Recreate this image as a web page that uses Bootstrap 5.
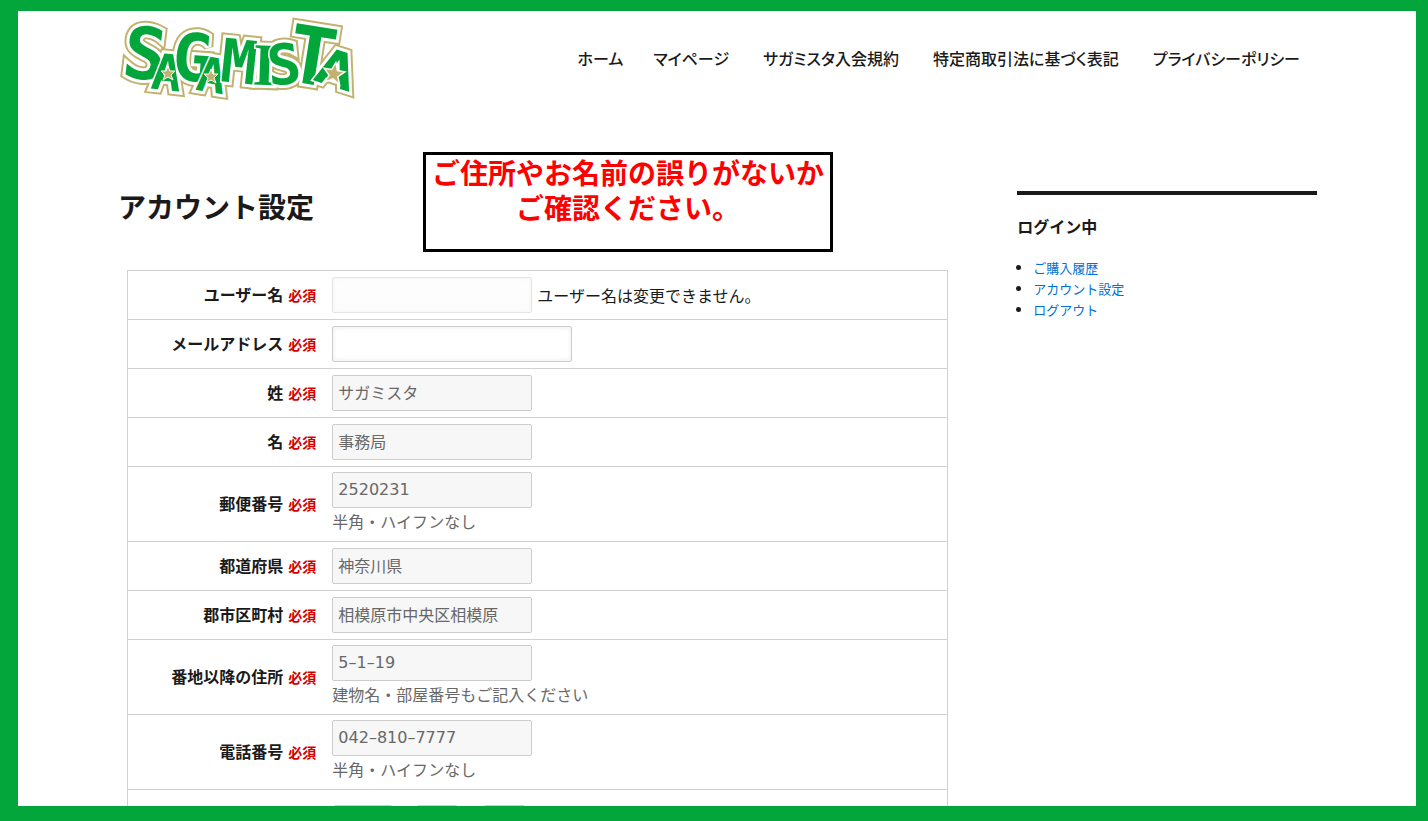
<!DOCTYPE html>
<html lang="ja">
<head>
<meta charset="utf-8">
<meta name="viewport" content="width=device-width, initial-scale=1">
<title>アカウント設定 | SAGAMISTA</title>
<link href="https://cdn.jsdelivr.net/npm/bootstrap@5.3.0/dist/css/bootstrap.min.css" rel="stylesheet">
<style>
body { font-family: "Noto Sans CJK JP", sans-serif; font-size: 16px; line-height: 26px; color: #1a1a1a; background: #02a63b; }
.site-frame { height: 100vh; padding: 11px 12px 15px 18px; }
.site-inner { height: 100%; overflow: hidden; background: #fff; padding: 0 99px 0 100px; }
.site-header { height: 96px; }
.site-logo { width: 240px; height: 76px; display: block; overflow: visible; }
.logo-front { paint-order: stroke; }
.site-nav { gap: 34px; padding-right: 17px; padding-bottom: 2px; font-feature-settings: "palt"; }
.site-nav .nav-link { padding: 0; color: #1a1a1a; font-weight: 500; }
.site-nav .nav-item:first-child { margin-right: -4px; }
.main-col { width: 70%; padding-top: 45px; }
.side-col { width: 25%; padding-top: 84px; }
.title-row { gap: 109px; margin-bottom: 18px; }
.title-row h1 { font-size: 28px; line-height: 36px; font-weight: 700; padding-top: 8px; }
.notice { width: 410px; height: 100px; border: 3px solid #000; color: #f00; font-size: 28px; line-height: 35px; font-weight: 700; }
.account-table { width: calc(100% - 18px); margin: 0 9px; border: 1px solid #d1d1d1; }
.account-table tr { border-top: 1px solid #d1d1d1; }
.account-table th { width: 24%; padding: 5px 8px 7px; text-align: right; vertical-align: middle; }
.account-table td { padding: 6px 8px; }
.account-table td.with-help { padding: 5px 8px 7px; }
.required { color: #d40000; font-size: 14px; margin-left: 5px; }
.account-table .form-control { width: 200px; height: 36px; padding: 0 5px 2px; border: 1px solid #ccc; border-radius: 2px; background: #f7f7f7; color: #686868; font-family: "DejaVu Sans", "Noto Sans CJK JP", sans-serif; font-size: 16px; line-height: 24px; }
.account-table .form-control.mail-box { width: 240px; background: #fff; box-shadow: inset 0 0 3px 2px #f5f5f5; }
.account-table .form-control:disabled { border-color: #e4e4e4; background: #fdfdfd; box-shadow: inset 0 0 3px 2px #f9f9f9; }
.user-line { gap: 5px; }
.help { color: #686868; }
.account-table .birth-row td { padding-top: 15px; }
.birth-row select { height: 24px; border: 1px solid #ccc; border-radius: 4px; appearance: none; background: linear-gradient(#3b99fc, #3b99fc) right / 16px 100% no-repeat border-box #fff; }
.birth-year { width: 62px; margin-right: 21px; }
.birth-month { width: 44px; margin-right: 23px; }
.birth-day { width: 45px; }
.side-col section { border-top: 4px solid #1a1a1a; padding-top: 18px; }
.side-col h2 { font-size: 16px; line-height: 26px; font-weight: 700; margin-bottom: 18px; }
.side-col ul { padding-left: 16px; font-size: 13px; line-height: 21px; }
.side-col a { color: #0070d2; text-decoration: none; }
</style>
</head>
<body>
<div class="site-frame">
<div class="site-inner">
  <header class="site-header d-flex align-items-center justify-content-between">
    <a href="#" aria-label="SAGAMISTA">
      <svg class="site-logo" viewBox="118 21 240 76">
        <defs>
          <g id="logo-word" font-family="'DejaVu Sans Mono',monospace" font-weight="700" text-anchor="middle" stroke-linejoin="miter" stroke-miterlimit="3">
            <text transform="translate(142 79) rotate(7)" font-size="72">S</text>
            <text transform="translate(191 81) rotate(4)" font-size="66">G</text>
            <text transform="translate(165 90) rotate(6)" font-size="50">A</text>
            <text transform="translate(209 92) rotate(9)" font-size="48">A</text>
            <text transform="translate(237 83) rotate(6)" font-size="60">M</text>
            <text transform="translate(264 85) rotate(2)" font-size="60" font-family="Liberation Serif">I</text>
            <text transform="translate(286 84) rotate(-6)" font-size="56">S</text>
            <text transform="translate(308 84) rotate(9)" font-size="80">T</text>
            <text transform="translate(331 86) rotate(18)" font-size="50" font-family="DejaVu Sans">A</text>
          </g>
          <polygon id="logo-star" points="0,-7 2,-2 7,-2 3,2 5,7 0,4 -5,7 -3,2 -7,-2 -2,-2"/>
        </defs>
        <use href="#logo-word" fill="#c2b270" stroke="#c2b270" stroke-width="10"/>
        <use href="#logo-word" fill="#fff" stroke="#fff" stroke-width="6"/>
        <use class="logo-front" href="#logo-word" fill="#02a63b" stroke="#fff" stroke-width="3"/>
        <g fill="#c2b270" stroke="#fff" stroke-width="1">
          <use href="#logo-star" x="168" y="73"/>
          <use href="#logo-star" x="211" y="76"/>
          <use href="#logo-star" transform="translate(334 73) rotate(10) scale(1.5)"/>
        </g>
      </svg>
    </a>
    <nav>
      <ul class="nav site-nav flex-nowrap">
        <li class="nav-item"><a class="nav-link" href="#">ホーム</a></li>
        <li class="nav-item"><a class="nav-link" href="#">マイページ</a></li>
        <li class="nav-item"><a class="nav-link" href="#">サガミスタ入会規約</a></li>
        <li class="nav-item"><a class="nav-link" href="#">特定商取引法に基づく表記</a></li>
        <li class="nav-item"><a class="nav-link" href="#">プライバシーポリシー</a></li>
      </ul>
    </nav>
  </header>

  <div class="d-flex justify-content-between align-items-start">
    <main class="main-col">
      <div class="title-row d-flex align-items-center">
        <h1 class="mb-0 text-nowrap">アカウント設定</h1>
        <div class="notice text-center text-nowrap flex-shrink-0">
          <div>ご住所やお名前の誤りがないか</div>
          <div>ご確認ください。</div>
        </div>
      </div>
      <form>
      <table class="account-table">
        <tbody>
          <tr>
            <th><label for="user">ユーザー名</label><span class="required">必須</span></th>
            <td><div class="user-line d-flex align-items-center"><input id="user" class="form-control" type="text" disabled><span>ユーザー名は変更できません。</span></div></td>
          </tr>
          <tr>
            <th><label for="mail">メールアドレス</label><span class="required">必須</span></th>
            <td><input id="mail" class="form-control mail-box" type="email"></td>
          </tr>
          <tr>
            <th><label for="sei">姓</label><span class="required">必須</span></th>
            <td><input id="sei" class="form-control" type="text" value="サガミスタ"></td>
          </tr>
          <tr>
            <th><label for="mei">名</label><span class="required">必須</span></th>
            <td><input id="mei" class="form-control" type="text" value="事務局"></td>
          </tr>
          <tr>
            <th><label for="zip">郵便番号</label><span class="required">必須</span></th>
            <td class="with-help"><input id="zip" class="form-control" type="text" value="2520231"><div class="help">半角・ハイフンなし</div></td>
          </tr>
          <tr>
            <th><label for="pref">都道府県</label><span class="required">必須</span></th>
            <td><input id="pref" class="form-control" type="text" value="神奈川県"></td>
          </tr>
          <tr>
            <th><label for="city">郡市区町村</label><span class="required">必須</span></th>
            <td><input id="city" class="form-control" type="text" value="相模原市中央区相模原"></td>
          </tr>
          <tr>
            <th><label for="street">番地以降の住所</label><span class="required">必須</span></th>
            <td class="with-help"><input id="street" class="form-control" type="text" value="5–1–19"><div class="help">建物名・部屋番号もご記入ください</div></td>
          </tr>
          <tr>
            <th><label for="tel">電話番号</label><span class="required">必須</span></th>
            <td class="with-help"><input id="tel" class="form-control" type="tel" value="042–810–7777"><div class="help">半角・ハイフンなし</div></td>
          </tr>
          <tr class="birth-row">
            <th></th>
            <td><div class="d-flex"><select class="birth-year" aria-label="年"></select><select class="birth-month" aria-label="月"></select><select class="birth-day" aria-label="日"></select></div></td>
          </tr>
        </tbody>
      </table>
      </form>
    </main>
    <aside class="side-col">
      <section>
        <h2>ログイン中</h2>
        <ul>
          <li><a href="#">ご購入履歴</a></li>
          <li><a href="#">アカウント設定</a></li>
          <li><a href="#">ログアウト</a></li>
        </ul>
      </section>
    </aside>
  </div>
</div>
</div>
<script src="https://cdn.jsdelivr.net/npm/bootstrap@5.3.0/dist/js/bootstrap.bundle.min.js"></script>
</body>
</html>
